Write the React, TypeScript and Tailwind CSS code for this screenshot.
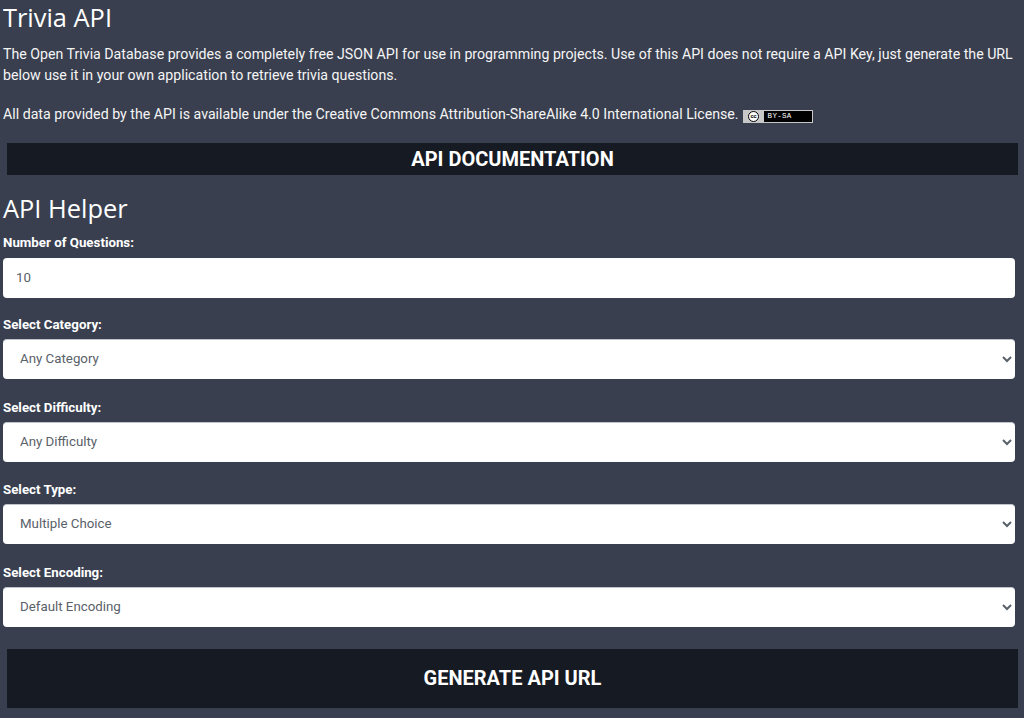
import React from "react";

const fields = [
  { label: "Select Category:", value: "Any Category" },
  { label: "Select Difficulty:", value: "Any Difficulty" },
  { label: "Select Type:", value: "Multiple Choice" },
  { label: "Select Encoding:", value: "Default Encoding" },
];

const CcBadge = () => (
  <span className="inline-flex w-[70px] h-[13px] ml-[4px] bg-black border border-[#c8c8c8] items-center align-[1px]">
    <span className="w-[20px] h-full bg-[#c8c8c8] flex items-center justify-center">
      <span className="w-[11px] h-[11px] rounded-full bg-white border-[1.5px] border-black text-black text-[6px] leading-[8px] text-center font-bold">
        cc
      </span>
    </span>
    <span className="ml-[4px] text-white text-[7.5px] leading-none tracking-[0.3px] font-['Liberation_Mono',monospace]">
      BY-SA
    </span>
  </span>
);

export default function App() {
  return (
    <div className="w-[1024px] h-[718px] overflow-hidden bg-[#393f4f] text-white font-['Roboto',sans-serif] text-[14.18px] leading-[21px] px-[3px]">
      <h2 className="font-['Open_Sans',sans-serif] text-[25.4px] leading-[30px] pt-[2px]">Trivia API</h2>
      <p className="mt-[12px] w-[1012px] text-[#f5f5f5]">
        The Open Trivia Database provides a completely free JSON API for use in programming projects. Use of this API
        does not require a API Key, just generate the URL below use it in your own application to retrieve trivia
        questions.
      </p>
      <p className="mt-[18px] h-[21px] text-[#f5f5f5]">
        All data provided by the API is available under the Creative Commons Attribution-ShareAlike 4.0 International
        License.
        <CcBadge />
      </p>
      <button className="block mt-[18px] ml-[4px] w-[1011px] h-[32px] bg-[#161a22] text-[20px] font-bold text-white">
        API DOCUMENTATION
      </button>
      <h2 className="font-['Open_Sans',sans-serif] text-[25.4px] leading-[32px] mt-[17px]">API Helper</h2>
      <label className="block mt-[9px] text-[13.3px] leading-[20px] font-bold">Number of Questions:</label>
      <input
        readOnly
        value="10"
        className="block mt-[5px] w-[1012px] h-[40px] rounded-[4px] bg-white px-[13px] pb-[2px] text-[13.3px] text-[#5a6169] outline-none"
      />
      <div className="mt-[17px] flex flex-col gap-[18.5px]">
        {fields.map((f) => (
          <div key={f.label}>
            <label className="block text-[13.3px] leading-[20px] font-bold">{f.label}</label>
            <select
              defaultValue={f.value}
              className="block mt-[4px] w-[1011.5px] h-[40px] rounded-[4px] bg-white px-[13px] pb-[2px] text-[13.3px] text-[#5a6169] border-t border-[#c0c4cc] outline-none"
            >
              <option>{f.value}</option>
            </select>
          </div>
        ))}
      </div>
      <button className="block mt-[22px] ml-[4px] w-[1011px] h-[59px] bg-[#161a22] text-[20px] font-bold text-white">
        GENERATE API URL
      </button>
    </div>
  );
}
